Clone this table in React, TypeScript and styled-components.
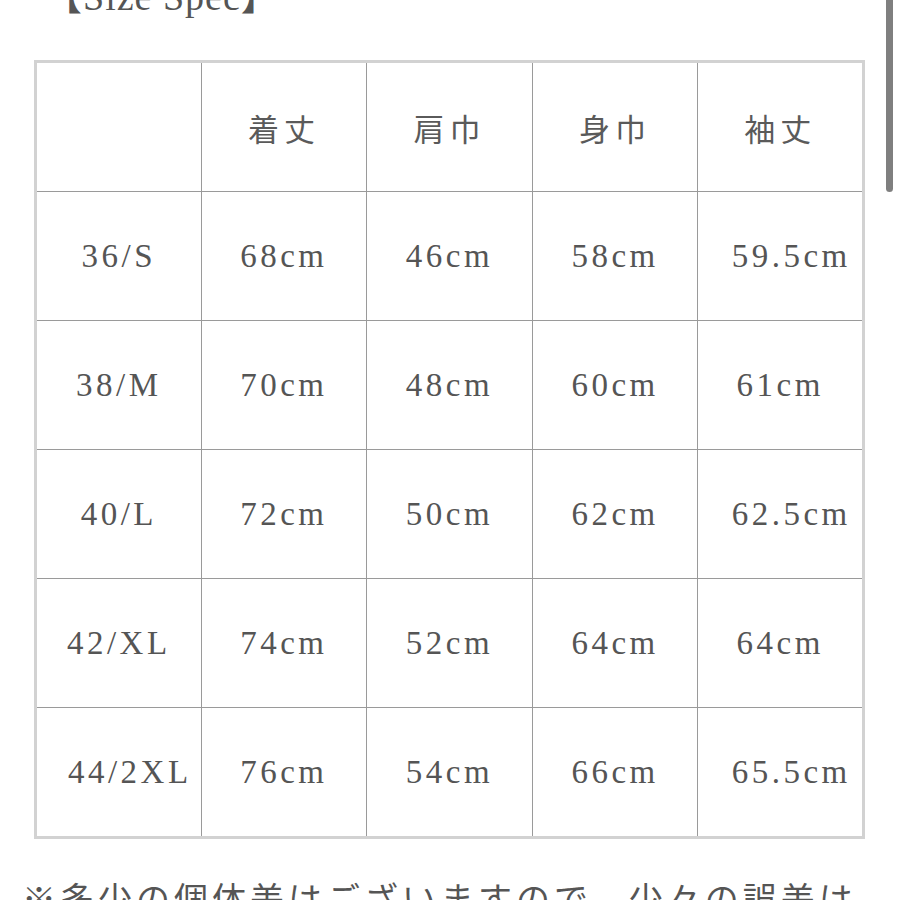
import { createGlobalStyle, styled } from "styled-components"

const GlobalStyle = createGlobalStyle`
  html, body {
    margin: 0;
    padding: 0;
    background: #ffffff;
    overflow: hidden;
  }
`

const headers = ["", "着丈", "肩巾", "身巾", "袖丈"]

const rows = [
  ["36/S", "68cm", "46cm", "58cm", "59.5cm"],
  ["38/M", "70cm", "48cm", "60cm", "61cm"],
  ["40/L", "72cm", "50cm", "62cm", "62.5cm"],
  ["42/XL", "74cm", "52cm", "64cm", "64cm"],
  ["44/2XL", "76cm", "54cm", "66cm", "65.5cm"],
]

function App() {
  return (
    <Page>
      <GlobalStyle />
      <Title>【Size Spec】</Title>
      <SpecTable>
        <thead>
          <tr>
            {headers.map((h, i) => (
              <HeadCell key={i}>{h}</HeadCell>
            ))}
          </tr>
        </thead>
        <tbody>
          {rows.map((row) => (
            <tr key={row[0]}>
              {row.map((v, i) => (
                <Cell key={i} $wide={v.length >= 6}>{v}</Cell>
              ))}
            </tr>
          ))}
        </tbody>
      </SpecTable>
      <Note>※多少の個体差はございますので、少々の誤差は</Note>
      <ScrollThumb />
    </Page>
  )
}

export default App

const Page = styled.div`
  position: relative;
  width: 900px;
  height: 900px;
  overflow: hidden;
  background: #ffffff;
  color: #555555;
`

const Title = styled.div`
  font-family: "Liberation Serif", "Noto Sans CJK JP", serif;
  font-size: 38px;
  line-height: 38px;
  margin-top: -22px;
  padding-left: 44px;
  letter-spacing: 1px;
  color: #555555;
  height: 38px;
`

const SpecTable = styled.table`
  margin-top: 44px;
  margin-left: 34px;
  width: 831px;
  border-collapse: collapse;
  border: 3px solid #d2d2d2;
  table-layout: fixed;
`

const HeadCell = styled.th`
  height: 128px;
  padding: 0;
  border: 1.5px solid #9a9a9a;
  font-family: "Noto Sans CJK JP", sans-serif;
  font-weight: 400;
  font-size: 31px;
  letter-spacing: 5px;
  color: #5a5a5a;
  text-align: center;
  vertical-align: middle;
`

const Cell = styled.td<{ $wide?: boolean }>`
  height: 128px;
  padding: 0 0 0 ${(p) => (p.$wide ? "22px" : "0")};
  border: 1.5px solid #9a9a9a;
  font-family: "Liberation Serif", serif;
  font-size: 33px;
  letter-spacing: 3.5px;
  color: #555555;
  text-align: center;
  vertical-align: middle;
  white-space: nowrap;
`

const Note = styled.div`
  margin-top: 34px;
  padding-left: 22px;
  font-family: "Noto Sans CJK JP", sans-serif;
  font-size: 34px;
  letter-spacing: 4px;
  white-space: nowrap;
  color: #555555;
`

const ScrollThumb = styled.div`
  position: absolute;
  top: 0;
  right: 7px;
  width: 7px;
  height: 192px;
  border-radius: 0 0 4px 4px;
  background: #7f7f7f;
`
